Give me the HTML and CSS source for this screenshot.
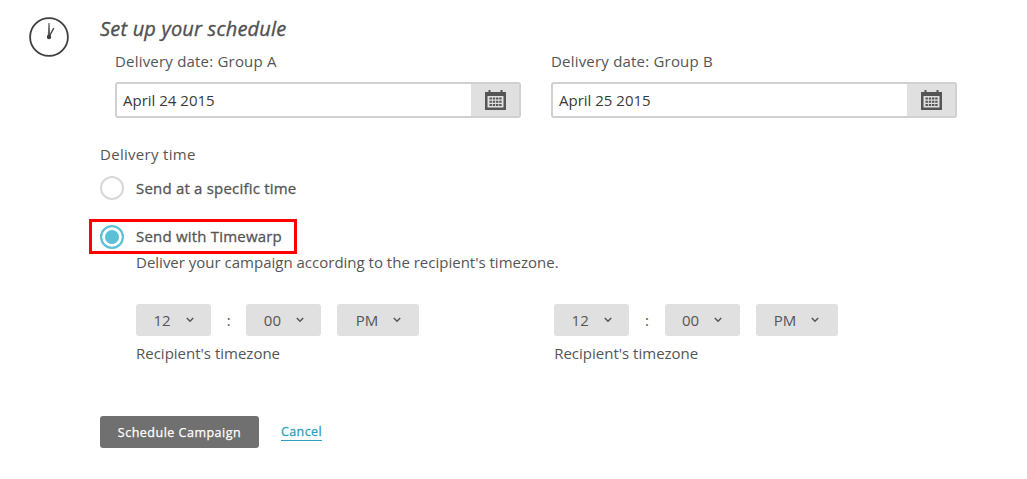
FILE: index.html
```html
<!DOCTYPE html>
<html lang="en">
<head>
<meta charset="utf-8">
<title>Set up your schedule</title>
<link rel="stylesheet" href="styles.css">
</head>
<body>
<div class="page">
  <svg class="clock" width="40" height="40" viewBox="0 0 40 40" aria-hidden="true">
    <circle cx="20" cy="20" r="18.9" fill="none" stroke="#3f3f3f" stroke-width="1.8"/>
    <path d="M20 6 L19.1 20 L20.9 20 Z" fill="#3f3f3f" stroke="#3f3f3f" stroke-width=".6"/>
    <path d="M20 20 L24.8 11" fill="none" stroke="#3f3f3f" stroke-width="1.4"/>
    <circle cx="20" cy="20" r="2.2" fill="#3f3f3f"/>
  </svg>
  <main class="main">
    <h1 class="title">Set up your schedule</h1>
    <div class="dates">
      <div class="date">
        <label class="date-label">Delivery date: Group A</label>
        <div class="date-field">
          <span class="date-value">April 24 2015</span>
          <span class="date-btn"><svg width="21" height="20" viewBox="0 0 21 20" aria-hidden="true"><path d="M0 2h3.5V0h2v2h10V0h2v2H21v18H0z" fill="#555"/><rect x="2.5" y="6" width="16" height="11.5" fill="#e0e0e0"/><path d="M4.5 7.5h2.4v2H4.5zM7.8 7.5h2.4v2H7.8zM11 7.5h2.4v2H11zM14.2 7.5h2.4v2h-2.4zM4.5 10.7h2.4v2H4.5zM7.8 10.7h2.4v2H7.8zM11 10.7h2.4v2H11zM14.2 10.7h2.4v2h-2.4zM4.5 13.9h2.4v2H4.5zM7.8 13.9h2.4v2H7.8zM11 13.9h2.4v2H11zM14.2 13.9h2.4v2h-2.4z" fill="#555"/></svg></span>
        </div>
      </div>
      <div class="date">
        <label class="date-label">Delivery date: Group B</label>
        <div class="date-field">
          <span class="date-value">April 25 2015</span>
          <span class="date-btn"><svg width="21" height="20" viewBox="0 0 21 20" aria-hidden="true"><path d="M0 2h3.5V0h2v2h10V0h2v2H21v18H0z" fill="#555"/><rect x="2.5" y="6" width="16" height="11.5" fill="#e0e0e0"/><path d="M4.5 7.5h2.4v2H4.5zM7.8 7.5h2.4v2H7.8zM11 7.5h2.4v2H11zM14.2 7.5h2.4v2h-2.4zM4.5 10.7h2.4v2H4.5zM7.8 10.7h2.4v2H7.8zM11 10.7h2.4v2H11zM14.2 10.7h2.4v2h-2.4zM4.5 13.9h2.4v2H4.5zM7.8 13.9h2.4v2H7.8zM11 13.9h2.4v2H11zM14.2 13.9h2.4v2h-2.4z" fill="#555"/></svg></span>
        </div>
      </div>
    </div>
    <div class="delivery-label">Delivery time</div>
    <div class="radio-row">
      <span class="radio"></span>
      <span class="radio-text">Send at a specific time</span>
    </div>
    <div class="highlighted">
      <span class="radio radio-on"></span>
      <span class="radio-text radio-text-up">Send with Timewarp</span>
    </div>
    <p class="hint">Deliver your campaign according to the recipient's timezone.</p>
    <div class="times">
      <div class="time">
        <div class="time-row">
          <span class="select w75">12<svg class="chev" width="8" height="6" viewBox="0 0 8 6"><path d="M.8 1l3.2 3.2L7.2 1" fill="none" stroke="#555" stroke-width="1.5"/></svg></span>
          <span class="colon">:</span>
          <span class="select w75">00<svg class="chev" width="8" height="6" viewBox="0 0 8 6"><path d="M.8 1l3.2 3.2L7.2 1" fill="none" stroke="#555" stroke-width="1.5"/></svg></span>
          <span class="select w82">PM<svg class="chev" width="8" height="6" viewBox="0 0 8 6"><path d="M.8 1l3.2 3.2L7.2 1" fill="none" stroke="#555" stroke-width="1.5"/></svg></span>
        </div>
        <div class="tz">Recipient's timezone</div>
      </div>
      <div class="time">
        <div class="time-row">
          <span class="select w75">12<svg class="chev" width="8" height="6" viewBox="0 0 8 6"><path d="M.8 1l3.2 3.2L7.2 1" fill="none" stroke="#555" stroke-width="1.5"/></svg></span>
          <span class="colon">:</span>
          <span class="select w75">00<svg class="chev" width="8" height="6" viewBox="0 0 8 6"><path d="M.8 1l3.2 3.2L7.2 1" fill="none" stroke="#555" stroke-width="1.5"/></svg></span>
          <span class="select w82">PM<svg class="chev" width="8" height="6" viewBox="0 0 8 6"><path d="M.8 1l3.2 3.2L7.2 1" fill="none" stroke="#555" stroke-width="1.5"/></svg></span>
        </div>
        <div class="tz">Recipient's timezone</div>
      </div>
    </div>
    <div class="actions">
      <span class="primary">Schedule Campaign</span>
      <a class="cancel" href="#">Cancel</a>
    </div>
  </main>
</div>
</body>
</html>
```
FILE: styles.css
```css
* { box-sizing: border-box; }
html, body { margin: 0; background: #fff; }
body {
  font-family: "Open Sans", "Liberation Sans", sans-serif;
  color: #555;
  font-size: 15px;
  height: 479px;
  overflow: hidden;
}
.page { display: flex; padding: 17px 0 0 29px; align-items: flex-start; }
.clock { flex: none; display: block; }
.main { margin-left: 31px; flex: none; width: 870px; }
.title {
  margin: 0;
  font-size: 20px;
  font-style: italic;
  font-weight: 400;
  letter-spacing: .2px;
  -webkit-text-stroke: .35px #505050;
  line-height: 24px;
  color: #505050;
}
.dates { display: flex; gap: 30px; padding-left: 15px; margin-top: 10px; }
.date { flex: none; width: 406px; }
.date-label { display: block; line-height: 20px; letter-spacing: .2px; }
.date-field {
  margin-top: 11px;
  display: flex;
  height: 36px;
  border: 2px solid #d0d0d0;
  border-radius: 3px;
  overflow: hidden;
}
.date-value { flex: 1; padding-left: 6px; line-height: 33px; color: #3a3a3a; }
.date-btn { width: 48px; background: #e0e0e0; display: flex; align-items: center; justify-content: center; }
.delivery-label { margin-top: 26px; line-height: 20px; letter-spacing: .3px; }
.radio-row { display: flex; align-items: center; margin-top: 12px; height: 24px; }
.radio {
  flex: none;
  width: 24px;
  height: 24px;
  border-radius: 50%;
  border: 2px solid #d8d8d8;
  background: #fff;
  margin-right: 12px;
}
.radio-on {
  border-color: #5bc0d8;
  background: #5bc0d8;
  box-shadow: inset 0 0 0 3px #fff;
}
.radio-text { letter-spacing: .2px; -webkit-text-stroke: .3px #555; }
.radio-text-up { margin-bottom: 2px; }
.highlighted {
  display: flex;
  align-items: center;
  width: 208px;
  height: 35px;
  margin: 19px 0 0 -11px;
  padding-left: 8px;
  border: 3px solid #fe0000;
}
.hint { margin: -2px 0 0 36px; line-height: 20px; }
.times { display: flex; margin-left: 36px; margin-top: 32px; }
.time { flex: none; width: 418.2px; }
.time-row { display: flex; align-items: center; height: 32px; }
.select {
  display: flex;
  align-items: center;
  justify-content: center;
  gap: 15px;
  height: 32px;
  background: #e0e0e0;
  border-radius: 3px;
  flex: none;
}
.w75 { width: 75px; }
.w82 { width: 82px; margin-left: 16px; }
.colon { width: 35.4px; text-align: center; line-height: 28px; }
.chev { display: block; }
.tz { margin-top: 7px; line-height: 20px; }
.actions { display: flex; align-items: center; margin-top: 53px; }
.primary {
  width: 159px;
  height: 32px;
  background: #707070;
  color: #fff;
  border-radius: 3px;
  font-size: 12.5px;
  letter-spacing: .5px;
  -webkit-text-stroke: .25px #fff;
  display: flex;
  align-items: center;
  justify-content: center;
}
.cancel {
  margin-left: 22px;
  color: #2d9fc0;
  font-size: 12.5px;
  letter-spacing: .4px;
  -webkit-text-stroke: .3px #2d9fc0;
  text-decoration: none;
  border-bottom: 1px solid #2d9fc0;
  line-height: 16px;
}
```
